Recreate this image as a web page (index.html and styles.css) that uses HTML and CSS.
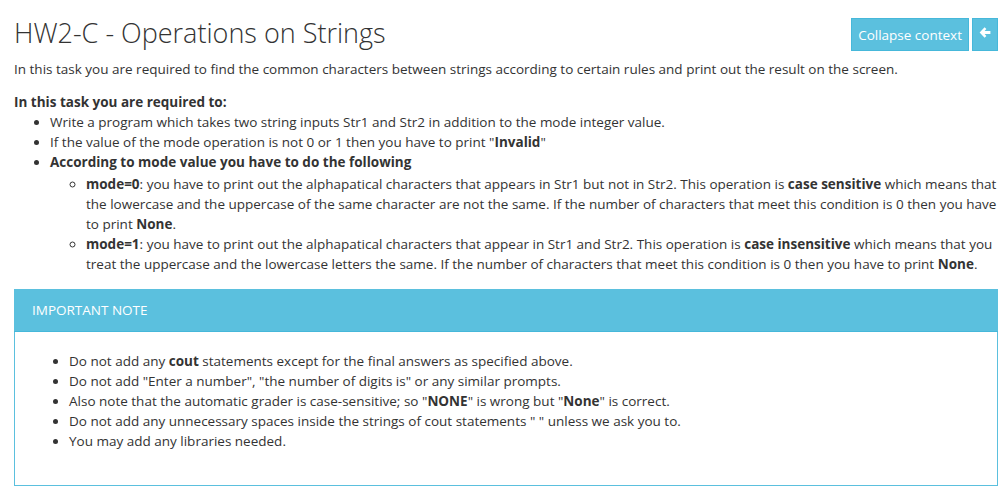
FILE: index.html
```html
<!DOCTYPE html>
<html>
<head>
<meta charset="utf-8">
<link rel="stylesheet" href="styles.css">
</head>
<body>
<div class="page">
  <div class="top">
    <h1 class="title">HW2-C - Operations on Strings</h1>
    <div class="actions">
      <button class="btn">Collapse context</button>
      <button class="btn btn-icon" aria-label="back">
        <svg width="12" height="11" viewBox="0 0 12 11"><path d="M5.6 0.3 L0.6 5.5 L5.6 10.7 L7.4 8.9 L5.6 7.1 L11.4 7.1 L11.4 3.9 L5.6 3.9 L7.4 2.1 Z" fill="#fff"/></svg>
      </button>
    </div>
  </div>
  <p class="intro">In this task you are required to find the common characters between strings according to certain rules and print out the result on the screen.</p>
  <p class="lead"><b>In this task you are required to:</b></p>
  <ul class="list">
    <li>Write a program which takes two string inputs Str1 and Str2 in addition to the mode integer value.</li>
    <li>If the value of the mode operation is not 0 or 1 then you have to print "<b>Invalid</b>"</li>
    <li><b>According to mode value you have to do the following</b>
      <ul class="sub">
        <li><b>mode=0</b>: you have to print out the alphapatical characters that appears in Str1 but not in Str2. This operation is <b>case sensitive</b> which means that the lowercase and the uppercase of the same character are not the same. If the number of characters that meet this condition is 0 then you have to print <b>None</b>.</li>
        <li><b>mode=1</b>: you have to print out the alphapatical characters that appear in Str1 and Str2. This operation is <b>case insensitive</b> which means that you treat the uppercase and the lowercase letters the same. If the number of characters that meet this condition is 0 then you have to print <b>None</b>.</li>
      </ul>
    </li>
  </ul>
  <div class="panel">
    <div class="panel-head">IMPORTANT NOTE</div>
    <div class="panel-body">
      <ul class="notes">
        <li>Do not add any <b>cout</b> statements except for the final answers as specified above.</li>
        <li>Do not add "Enter a number", "the number of digits is" or any similar prompts.</li>
        <li>Also note that the automatic grader is case-sensitive; so "<b>NONE</b>" is wrong but "<b>None</b>" is correct.</li>
        <li>Do not add any unnecessary spaces inside the strings of cout statements " " unless we ask you to.</li>
        <li>You may add any libraries needed.</li>
      </ul>
    </div>
  </div>
</div>
</body>
</html>
```
FILE: styles.css
```css
* { box-sizing: border-box; }
html, body { margin: 0; padding: 0; background: #fff; }
body {
  font-family: "Open Sans", "Liberation Sans", sans-serif;
  font-size: 13.5px;
  line-height: 20px;
  color: #333;
}
.page { padding: 0 9px 0 14px; }
.top {
  display: flex;
  justify-content: space-between;
  align-items: flex-start;
}
.title {
  margin: 14px 0 0 0;
  font-weight: 300;
  font-size: 27px;
  line-height: 38px;
  color: #333;
}
.actions { display: flex; gap: 3px; margin-top: 18px; }
.btn {
  font-family: inherit;
  font-size: 13.5px;
  line-height: 20px;
  color: #fff;
  background: #5bc0de;
  border: 1px solid #46b8da;
  border-radius: 0;
  padding: 5px 6px;
  height: 33px;
  cursor: pointer;
}
.btn-icon {
  width: 26px;
  padding: 8px 0 0 0;
  display: flex;
  align-items: flex-start;
  justify-content: center;
}
.intro { margin: 7px 0 0 0; }
.lead { margin: 13px 0 0 0; }
.list { margin: 0; padding-left: 36px; }
.sub { margin: 2px 0 0 0; padding-left: 36px; list-style: circle; }
.panel {
  margin-top: 15px;
  border: 1px solid #5bc0de;
}
.panel-head {
  background: #5bc0de;
  color: #fff;
  height: 43px;
  padding: 11px 18px;
  border-bottom: 1px solid #46b8da;
  margin: -1px -1px 0 -1px;
}
.panel-body { padding: 19px 15px 34px 15px; }
.notes { margin: 0; padding-left: 39px; }
```
